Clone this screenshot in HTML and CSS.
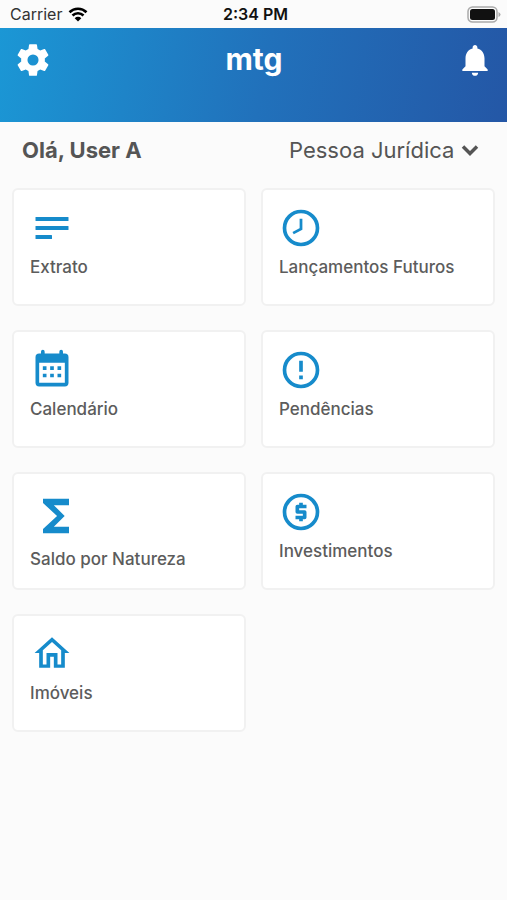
FILE: index.html
```html
<!DOCTYPE html>
<html lang="pt-BR">
<head>
<meta charset="utf-8">
<meta name="viewport" content="width=device-width, initial-scale=1">
<title>mtg</title>
<link rel="stylesheet" href="styles.css">
</head>
<body>
<div class="status">
  <div class="carrier">
    <span>Carrier</span>
    <svg class="wifi" viewBox="0 0 20 15" aria-hidden="true"><path d="M1.5 5.2a12.2 12.2 0 0 1 17 0M4.5 8.5a7.8 7.8 0 0 1 11 0" fill="none" stroke="currentColor" stroke-width="2.6"/><path d="M10 14.5l-3.3-3.3a4.7 4.7 0 0 1 6.6 0z"/></svg>
  </div>
  <span class="time">2:34 PM</span>
  <svg class="battery" viewBox="0 0 34 17" aria-hidden="true"><rect x="1" y="1" width="29" height="15" rx="4.500" fill="none" stroke="#aaa" stroke-width="1.500"/><rect x="3" y="3" width="25" height="11" rx="2.500"/><path d="M31.500 6v5q2-1 2-2.500t-2-2.500z" fill="#aaa"/></svg>
</div>
<header class="topbar">
  <button class="icon-button" type="button" aria-label="Configurações">
    <svg viewBox="0 0 24 24"><path d="M12,15.5A3.5,3.5 0 0,1 8.5,12A3.5,3.5 0 0,1 12,8.5A3.5,3.5 0 0,1 15.5,12A3.5,3.5 0 0,1 12,15.5M19.43,12.97C19.47,12.65 19.5,12.33 19.5,12C19.5,11.67 19.47,11.34 19.43,11L21.54,9.37C21.73,9.22 21.78,8.95 21.66,8.73L19.66,5.27C19.54,5.05 19.27,4.96 19.05,5.05L16.56,6.05C16.04,5.66 15.5,5.32 14.87,5.07L14.5,2.42C14.46,2.18 14.25,2 14,2H10C9.75,2 9.54,2.18 9.5,2.42L9.13,5.07C8.5,5.32 7.96,5.66 7.44,6.05L4.95,5.05C4.73,4.96 4.46,5.05 4.34,5.27L2.34,8.73C2.21,8.95 2.27,9.22 2.46,9.37L4.57,11C4.53,11.34 4.5,11.67 4.5,12C4.5,12.33 4.53,12.65 4.57,12.97L2.46,14.63C2.27,14.78 2.21,15.05 2.34,15.27L4.34,18.73C4.46,18.95 4.73,19.03 4.95,18.95L7.44,17.94C7.96,18.34 8.5,18.68 9.13,18.93L9.5,21.58C9.54,21.82 9.75,22 10,22H14C14.25,22 14.46,21.82 14.5,21.58L14.87,18.93C15.5,18.67 16.04,18.34 16.56,17.94L19.05,18.95C19.27,19.03 19.54,18.95 19.66,18.73L21.66,15.27C21.78,15.05 21.73,14.78 21.54,14.63L19.43,12.97Z"/></svg>
  </button>
  <h1 class="brand">mtg</h1>
  <button class="icon-button" type="button" aria-label="Notificações">
    <svg viewBox="0 0 24 24"><path d="M12 22c1.1 0 2-.9 2-2h-4c0 1.1.89 2 2 2zm6-6v-5c0-3.07-1.64-5.64-4.5-6.32V4c0-.83-.67-1.5-1.5-1.5s-1.5.67-1.500 1.5v.68C7.63 5.36 6 7.92 6 11v5l-2 2v1h16v-1l-2-2z"/></svg>
  </button>
</header>
<main>
  <div class="intro">
    <h2 class="greeting">Olá, User A</h2>
    <div class="profile">
      <select class="profile-select" aria-label="Tipo de pessoa">
        <option>Pessoa Jurídica</option>
      </select>
      <svg class="chevron" viewBox="0 0 18 12" aria-hidden="true"><path d="M2 2.500l7 7 7-7" fill="none" stroke="currentColor" stroke-width="3.500"/></svg>
    </div>
  </div>
  <nav class="cards">
    <a class="card" href="#extrato">
      <svg class="icon" viewBox="0 0 24 24"><rect x="3" y="6" width="18" height="2.200" rx=".3"/><rect x="3" y="10.900" width="18" height="2.200" rx=".3"/><rect x="3" y="15.800" width="9" height="2.200" rx=".3"/></svg>
      <span>Extrato</span>
    </a>
    <a class="card" href="#lancamentos">
      <svg class="icon" viewBox="0 0 24 24"><g fill="none" stroke="currentColor"><circle cx="12" cy="12" r="9" stroke-width="2"/><path d="M12 7v5.500L7.700 14.800" stroke-width="1.500"/></g></svg>
      <span>Lançamentos Futuros</span>
    </a>
    <a class="card" href="#calendario">
      <svg class="icon" viewBox="0 0 24 24"><path fill-rule="evenodd" d="M6 2a1 1 0 0 1 2 0v1h8V2a1 1 0 0 1 2 0v1h1a2 2 0 0 1 2 2v14a2 2 0 0 1-2 2H5a2 2 0 0 1-2-2V5a2 2 0 0 1 2-2h1zM5 8v11h14V8z"/><path d="M7 10h2v2H7zM11 10h2v2h-2zM15 10h2v2h-2zM7 14h2v2H7zM11 14h2v2h-2zM15 14h2v2h-2z"/></svg>
      <span>Calendário</span>
    </a>
    <a class="card" href="#pendencias">
      <svg class="icon" viewBox="0 0 24 24"><circle cx="12" cy="12" r="9" fill="none" stroke="currentColor" stroke-width="2"/><path d="M11 7h2v6h-2zM11 15h2v2h-2z"/></svg>
      <span>Pendências</span>
    </a>
    <a class="card" href="#saldo">
      <svg class="icon icon-large" viewBox="0 0 24 24"><path d="M18 4H6v2l6.500 6L6 18v2h12v-3h-7l5-5-5-5h7z"/></svg>
      <span>Saldo por Natureza</span>
    </a>
    <a class="card" href="#investimentos">
      <svg class="icon" viewBox="0 0 24 24"><circle cx="12" cy="12" r="9" fill="none" stroke="currentColor" stroke-width="2"/><path d="M11,17V16H9V14H13V13H10A1,1 0 0,1 9,12V9A1,1 0 0,1 10,8H11V7H13V8H15V10H11V11H14A1,1 0 0,1 15,12V15A1,1 0 0,1 14,16H13V17H11Z"/></svg>
      <span>Investimentos</span>
    </a>
    <a class="card" href="#imoveis">
      <svg class="icon" viewBox="0 0 24 24"><path d="M12 5.500l5 4.500V17.700h-2v-6.200H9v6.200H7V10l5-4.500M12 2.800L2.500 11.500H5v8h6v-6h2v6h6v-8h2.500z"/></svg>
      <span>Imóveis</span>
    </a>
  </nav>
</main>
</body>
</html>
```
FILE: styles.css
```css
* {
  box-sizing: border-box;
}

body {
  margin: 0;
  min-height: 100vh;
  background: #fbfbfb;
  color: #555;
  font-family: Inter, "Open Sans", sans-serif;
}

svg {
  display: block;
  fill: currentColor;
}

.status {
  display: grid;
  grid-template-columns: 1fr auto 1fr;
  align-items: center;
  height: 28px;
  padding: 0 6px 0 10px;
  color: #111;
  font-size: 16px;
  line-height: 20px;
}

.carrier {
  display: flex;
  align-items: center;
  gap: 6px;
  color: #333;
}

.wifi {
  width: 20px;
  height: 15px;
  color: #000;
}

.time {
  font-weight: 600;
}

.battery {
  width: 34px;
  height: 17px;
  justify-self: end;
}

.topbar {
  display: flex;
  justify-content: space-between;
  align-items: flex-start;
  height: 94px;
  padding: 13px 13px 0 14px;
  background: linear-gradient(100deg, #1b97d5, #2171bb 52%, #2457a6);
  color: #fff;
}

.icon-button {
  width: 38px;
  height: 38px;
  padding: 0;
  border: 0;
  background: none;
  color: inherit;
}

.brand {
  margin: 0;
  font-size: 30px;
  font-weight: 700;
  line-height: 36px;
}

.intro {
  display: flex;
  justify-content: space-between;
  align-items: center;
  height: 66px;
  padding: 0 28px 10px 22px;
}

.greeting {
  margin: 0;
  font-size: 22px;
  font-weight: 700;
  line-height: 28px;
}

.profile {
  position: relative;
  display: flex;
  align-items: center;
}

.profile-select {
  appearance: none;
  margin: 0;
  padding: 0 24px 0 0;
  border: 0;
  background: none;
  color: inherit;
  font-family: inherit;
  font-size: 22px;
  line-height: 28px;
}

.chevron {
  position: absolute;
  right: 0;
  width: 18px;
  height: 12px;
  pointer-events: none;
}

.cards {
  display: grid;
  grid-template-columns: 1fr 1fr;
  gap: 24px 15px;
  padding: 0 12px 24px;
}

.card {
  display: flex;
  flex-direction: column;
  align-items: flex-start;
  min-height: 118px;
  padding: 16px;
  border: 2px solid #f1f1f1;
  border-radius: 6px;
  background: #fff;
  color: #5c5c5c;
  font-size: 17px;
  font-weight: 500;
  line-height: 20px;
  gap: 7px;
  text-decoration: none;
}

.icon {
  width: 44px;
  height: 44px;
  color: #168bcb;
}

.icon-large {
  width: 52px;
  height: 52px;
}
```
